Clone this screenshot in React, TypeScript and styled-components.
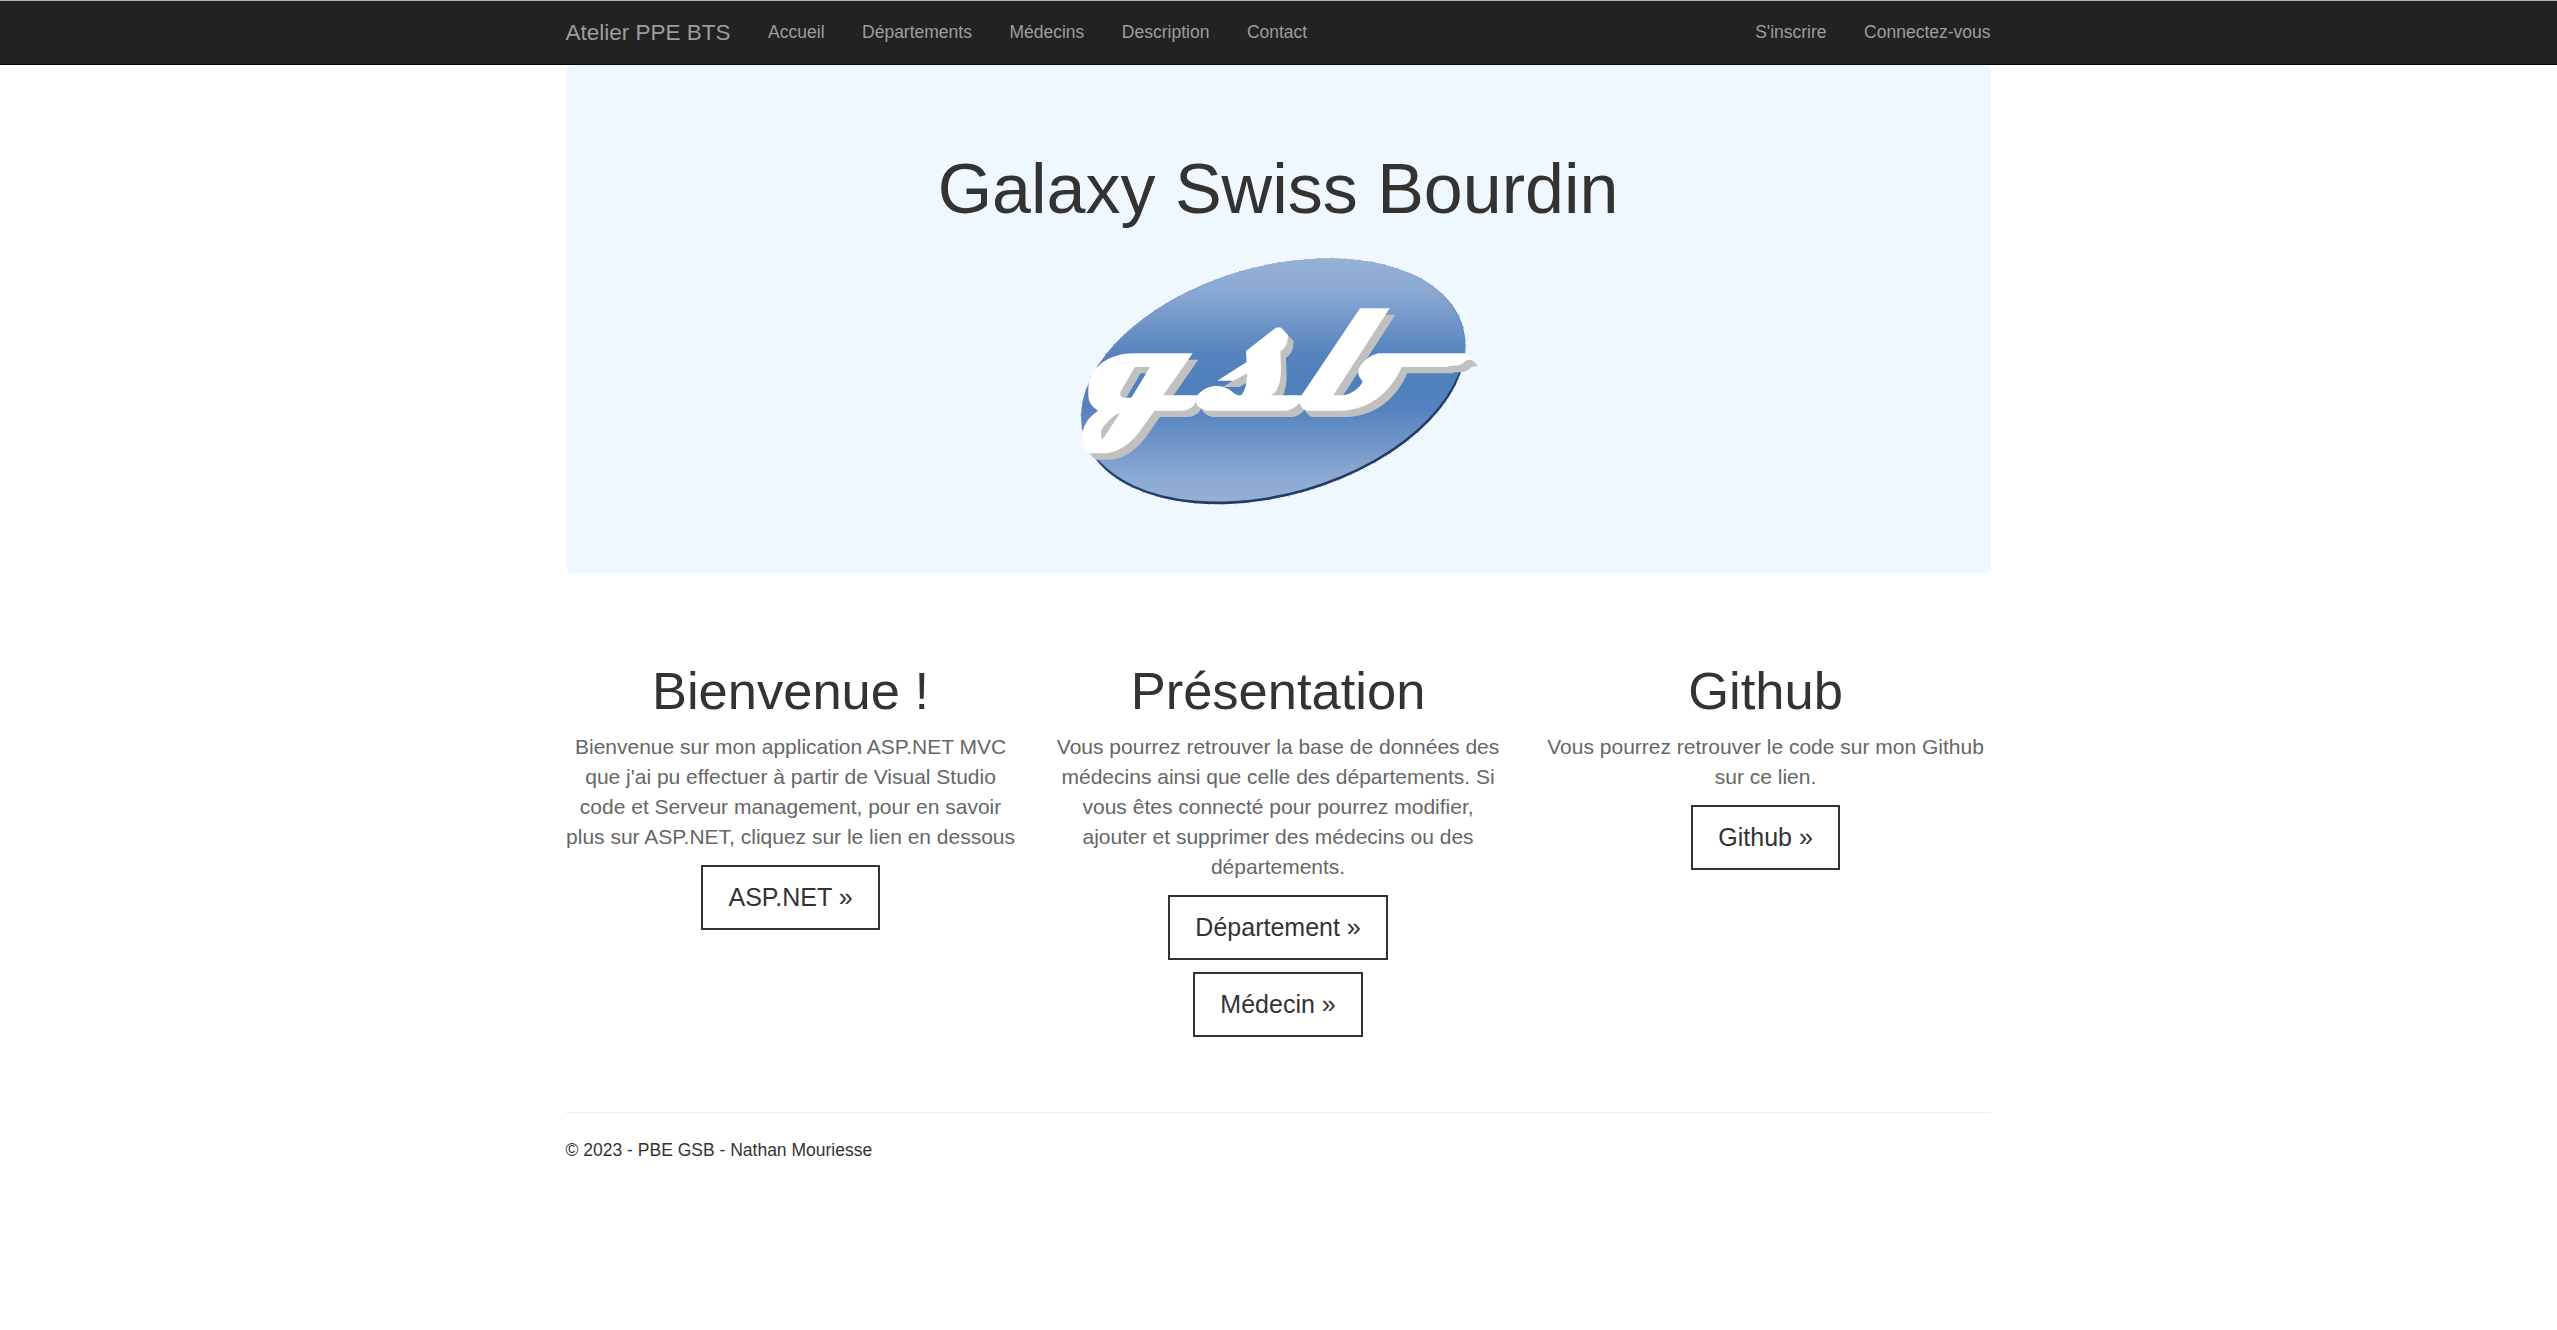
import React from "react";
import styled, { createGlobalStyle } from "styled-components";

const GlobalStyle = createGlobalStyle`
  *, *::before, *::after { box-sizing: border-box; }
  body {
    margin: 0;
    background: #fff;
    color: #333;
    font-family: "Liberation Sans", Arial, Helvetica, sans-serif;
    font-size: 17.5px;
    line-height: 25px;
  }
  a { text-decoration: none; }
`;

const Page = styled.div`
  padding-right: 0.9px;
`;

const Container = styled.div`
  width: 1462.5px;
  margin: 0 auto;
  padding: 0 18.75px;
`;

const Navbar = styled.nav`
  height: 65px;
  margin-right: -0.9px;
  padding-right: 0.9px;
  background: #222;
  border-top: 1px solid #b9aca6;
  border-bottom: 1px solid #080808;
`;

const NavRow = styled(Container)`
  display: flex;
  align-items: flex-start;
`;

const Brand = styled.a`
  padding: 18.75px 18.75px 18.75px 0;
  font-size: 22.5px;
  line-height: 25px;
  color: #9d9d9d;
`;

const NavList = styled.ul<{ $end?: boolean }>`
  display: flex;
  list-style: none;
  padding: 0;
  margin: ${(p) => (p.$end ? "0 -18.75px 0 auto" : "0")};
`;

const NavLink = styled.a`
  display: block;
  padding: 18.75px;
  color: #9d9d9d;
`;

const Jumbotron = styled.header`
  display: flex;
  flex-direction: column;
  align-items: center;
  height: 508.75px;
  padding-top: 86px;
  border-radius: 7.5px;
  background: #eff7ff;
`;

const Title = styled.h1`
  margin: 0;
  font-size: 70px;
  font-weight: 400;
  line-height: 77px;
`;

const Logo = styled.svg`
  display: block;
  width: 430px;
  height: 280px;
  margin: 12px 0 0 -6px;
`;

const Columns = styled.section`
  display: grid;
  grid-template-columns: repeat(3, 1fr);
  column-gap: 37.5px;
  padding: 88.25px 0 75px;
  text-align: center;
`;

const Column = styled.article`
  display: flex;
  flex-direction: column;
  align-items: center;
  gap: 12.5px;
`;

const Heading = styled.h2`
  margin: 0;
  font-size: 52.5px;
  font-weight: 400;
  line-height: 57.75px;
`;

const Text = styled.p`
  margin: 0;
  font-size: 21px;
  line-height: 30px;
  color: #666;
`;

const Button = styled.a`
  height: 65px;
  padding: 0 25px;
  border: 2px solid #333;
  font-size: 25px;
  line-height: 61px;
  white-space: nowrap;
  color: #333;
`;

const Footer = styled.footer`
  padding-top: 24.75px;
  border-top: 1px solid #eee;
`;

const G_LETTER =
  "M398 340L310 466H414L408 486C398 504 382 512 365 512H283L245 566C222 600 180 640 130 640H92C76 634 68 615 67 585C70 550 92 526 118 511C100 506 86 490 85 468V445C88 380 150 340 220 340Z";
const G_BOWL = "M225 381H270L214 473H190Q178 470 181 456Z";
const G_LOOP = "M180 520C158 526 134 552 124 572Q121 590 128 598Z";
const S_LETTER =
  "M412 466C430 445 450 438 472 438C495 438 511 450 522 460Q535 470 545 464Q553 455 558 435L562 400L520 422H472L560 366L558 333L648 263Q656 260 664 263L684 285L682 305Q676 325 661 334L663 385C663 430 652 458 633 466H735V490H718C704 505 690 512 675 512H440C425 508 410 500 408 486Z";
const B_LETTER =
  "M725 466L900 205H989L820 466H852C875 460 898 446 908 425L897 409C893 398 895 388 899 381C912 362 930 346 955 340H1217L1238 358L1219 361Q1206 373 1196 376Q1180 378 1166 378L1162 381H1025C1000 440 940 512 840 512H738Q722 504 719 490Z";

const ELLIPSE = { cx: 640, cy: 424, rx: 592, ry: 344, transform: "rotate(-16 640 424)" };

const GsbLogo = () => (
  <Logo viewBox="0 0 1290 840" role="img" aria-label="gsb">
    <defs>
      <linearGradient id="sky" gradientUnits="userSpaceOnUse" x1="0" y1="55" x2="0" y2="793">
        <stop offset="0" stopColor="#95b1d7" />
        <stop offset="0.14" stopColor="#8aa8d2" />
        <stop offset="0.38" stopColor="#5683bf" />
        <stop offset="0.5" stopColor="#4e80bc" />
        <stop offset="0.62" stopColor="#5683bf" />
        <stop offset="0.88" stopColor="#8aa8d2" />
        <stop offset="1" stopColor="#95b1d7" />
      </linearGradient>
      <linearGradient id="rim" gradientUnits="userSpaceOnUse" x1="637" y1="475" x2="658" y2="560">
        <stop offset="0" stopColor="#5f89c1" />
        <stop offset="1" stopColor="#1f3d66" />
      </linearGradient>
      <clipPath id="disc">
        <ellipse {...ELLIPSE} />
      </clipPath>
      <clipPath id="face">
        <ellipse cx={639} cy={420} rx={588} ry={340} transform="rotate(-16 639 420)" />
      </clipPath>
    </defs>
    <rect width="1290" height="840" fill="url(#rim)" clipPath="url(#disc)" />
    <rect width="1290" height="840" fill="url(#sky)" clipPath="url(#face)" />
    <ellipse {...ELLIPSE} rx={593} ry={345} fill="none" stroke="#e8505a" strokeWidth="3" strokeDasharray="3 37" opacity="0.7" />
    <g fill="#c0c0c0" fillRule="evenodd" transform="translate(17 19)">
      <path d={G_LETTER + G_BOWL} />
      <path d={S_LETTER} />
      <path d={B_LETTER} />
    </g>
    <g fill="#fff" fillRule="evenodd">
      <path d={G_LETTER + G_BOWL + G_LOOP} />
      <path d={S_LETTER} />
      <path d={B_LETTER} />
    </g>
  </Logo>
);

const LINKS = ["Accueil", "Départements", "Médecins", "Description", "Contact"];
const ACCOUNT_LINKS = ["S'inscrire", "Connectez-vous"];

const SECTIONS = [
  {
    title: "Bienvenue !",
    text: "Bienvenue sur mon application ASP.NET MVC que j'ai pu effectuer à partir de Visual Studio code et Serveur management, pour en savoir plus sur ASP.NET, cliquez sur le lien en dessous",
    buttons: ["ASP.NET »"],
  },
  {
    title: "Présentation",
    text: "Vous pourrez retrouver la base de données des médecins ainsi que celle des départements. Si vous êtes connecté pour pourrez modifier, ajouter et supprimer des médecins ou des départements.",
    buttons: ["Département »", "Médecin »"],
  },
  {
    title: "Github",
    text: "Vous pourrez retrouver le code sur mon Github sur ce lien.",
    buttons: ["Github »"],
  },
];

export default function App() {
  return (
    <Page>
      <GlobalStyle />
      <Navbar>
        <NavRow>
          <Brand href="#">Atelier PPE BTS</Brand>
          <NavList>
            {LINKS.map((label) => (
              <li key={label}>
                <NavLink href="#">{label}</NavLink>
              </li>
            ))}
          </NavList>
          <NavList $end>
            {ACCOUNT_LINKS.map((label) => (
              <li key={label}>
                <NavLink href="#">{label}</NavLink>
              </li>
            ))}
          </NavList>
        </NavRow>
      </Navbar>
      <Container>
        <Jumbotron>
          <Title>Galaxy Swiss Bourdin</Title>
          <GsbLogo />
        </Jumbotron>
        <Columns>
          {SECTIONS.map((section) => (
            <Column key={section.title}>
              <Heading>{section.title}</Heading>
              <Text>{section.text}</Text>
              {section.buttons.map((label) => (
                <Button key={label} href="#">
                  {label}
                </Button>
              ))}
            </Column>
          ))}
        </Columns>
        <Footer>© 2023 - PBE GSB - Nathan Mouriesse</Footer>
      </Container>
    </Page>
  );
}
